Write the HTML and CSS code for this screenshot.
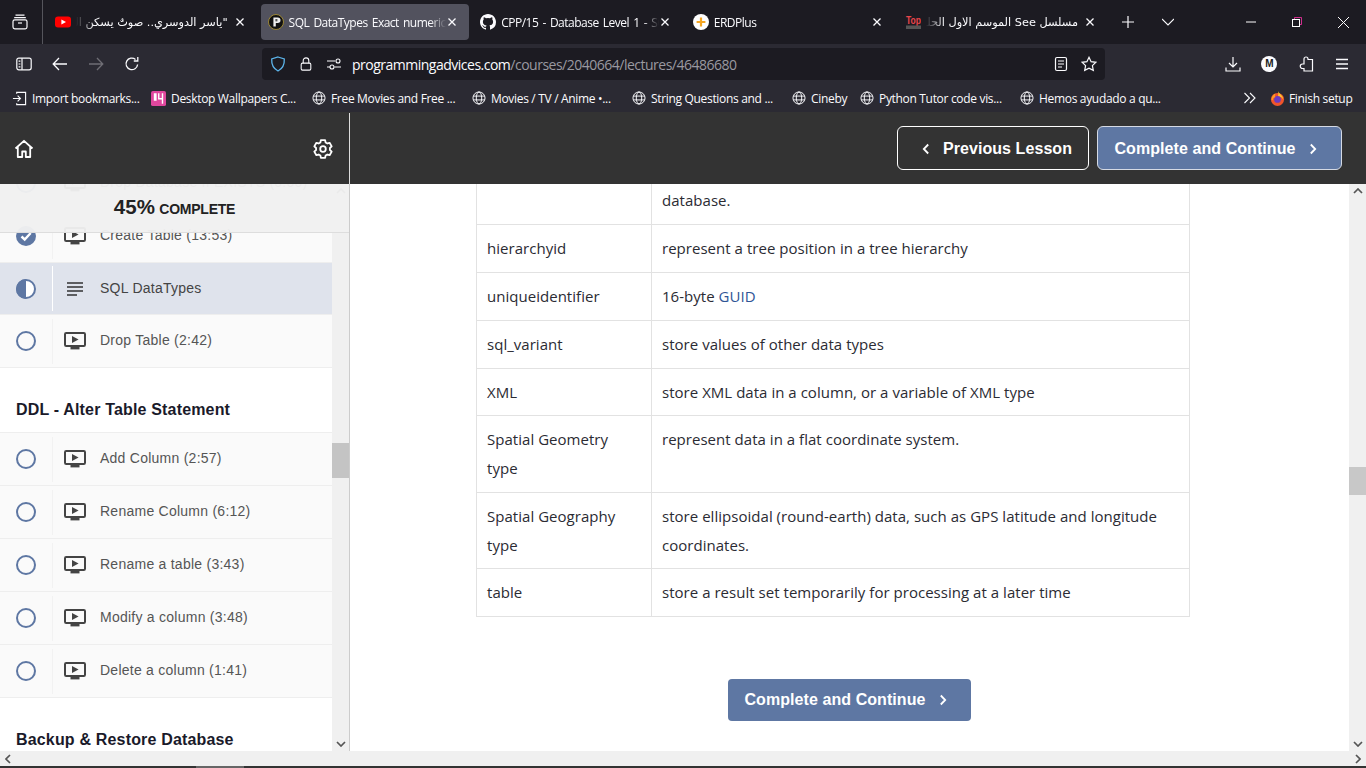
FILE: index.html
```html
<!DOCTYPE html>
<html lang="en">
<head>
<meta charset="utf-8">
<title>SQL DataTypes</title>
<link rel="stylesheet" href="styles.css">
</head>
<body>
<svg class="defs" width="0" height="0" aria-hidden="true">
  <symbol id="globe" viewBox="0 0 16 16"><g fill="none" stroke="currentColor" stroke-width="1.1"><circle cx="8" cy="8" r="6.9"/><ellipse cx="8" cy="8" rx="3.1" ry="6.9"/><path d="M1.5 5.8h13M1.5 10.2h13"/></g></symbol>
  <symbol id="close" viewBox="0 0 10 10"><path d="M1.5 1.5l7 7M8.5 1.5l-7 7" fill="none" stroke="currentColor" stroke-width="1.3"/></symbol>
  <symbol id="play" viewBox="0 0 22 20"><rect x="1" y="2" width="20" height="13" rx="1.2" fill="none" stroke="#444" stroke-width="2"/><rect x="6.5" y="16" width="9" height="2.4" fill="#444"/><path d="M8 5l6.600 3.500L8 12z" fill="#444"/></symbol>
  <symbol id="ring" viewBox="0 0 20 20"><circle cx="10" cy="10" r="9" fill="none" stroke="#5e77a3" stroke-width="2"/></symbol>
  <symbol id="chev-r" viewBox="0 0 8 12"><path d="M1.8 1.5L6.2 6l-4.4 4.5" fill="none" stroke="currentColor" stroke-width="1.8"/></symbol>
  <symbol id="chev-l" viewBox="0 0 8 12"><path d="M6.2 1.5L1.8 6l4.4 4.5" fill="none" stroke="currentColor" stroke-width="1.8"/></symbol>
</svg>

<header class="tabbar">
  <div class="tab-view">
    <svg class="ico16" viewBox="0 0 16 16"><g fill="none" stroke="#fbfbfe" stroke-width="1.2"><path d="M3.5 1.2h9M2.2 3.6h11.6"/><rect x="1" y="5.8" width="14" height="9" rx="1.8"/><path d="M6 9h4"/></g></svg>
  </div>
  <div class="tabs">
    <div class="tab">
      <svg class="fav" viewBox="0 0 16 16"><rect y="2.5" width="16" height="11" rx="3" fill="#f00"/><path d="M6.4 5.4L11 8l-4.6 2.6z" fill="#fff"/></svg>
      <span class="tab-title rtl">"ياسر الدوسري.. صوتٌ يسكن القلوب</span>
      <svg class="x"><use href="#close"/></svg>
    </div>
    <div class="tab tab-active">
      <svg class="fav" viewBox="0 0 16 16"><circle cx="8" cy="8" r="7.5" fill="#111" stroke="#b59a35" stroke-width=".8"/><path d="M5.4 3.6h4.4a2.6 2.6 0 010 5.4H7.8v3.6H5.4z" fill="#eee"/><path d="M7.4 5h2v2.4h-2z" fill="#555"/></svg>
      <span class="tab-title">SQL DataTypes Exact numeric types</span>
      <svg class="x"><use href="#close"/></svg>
    </div>
    <div class="tab">
      <svg class="fav" viewBox="0 0 16 16"><path fill="#fbfbfe" d="M8 0C3.58 0 0 3.58 0 8c0 3.54 2.29 6.53 5.47 7.59.4.07.55-.17.55-.38v-1.34c-2.23.48-2.7-1.07-2.7-1.07-.36-.92-.89-1.17-.89-1.17-.73-.5.05-.49.05-.49.8.06 1.23.83 1.23.83.71 1.22 1.87.87 2.33.66.07-.52.28-.87.5-1.07-1.78-.2-3.64-.89-3.64-3.95 0-.87.31-1.59.82-2.15-.08-.2-.36-1.02.08-2.12 0 0 .67-.21 2.2.82a7.6 7.6 0 014 0c1.53-1.04 2.2-.82 2.2-.82.44 1.1.16 1.92.08 2.12.51.56.82 1.27.82 2.15 0 3.07-1.87 3.75-3.65 3.95.29.25.54.73.54 1.48v2.2c0 .21.15.46.55.38A8 8 0 0016 8c0-4.42-3.58-8-8-8z"/></svg>
      <span class="tab-title">CPP/15 - Database Level 1 - SQL Server</span>
      <svg class="x"><use href="#close"/></svg>
    </div>
    <div class="tab">
      <svg class="fav" viewBox="0 0 16 16"><circle cx="8" cy="8" r="8" fill="#fff"/><path d="M8 3.6v8.8M3.6 8h8.8" stroke="#f5a623" stroke-width="2.2"/></svg>
      <span class="tab-title">ERDPlus</span>
      <svg class="x"><use href="#close"/></svg>
    </div>
    <div class="tab">
      <svg class="fav" viewBox="0 0 16 16"><text x="8.5" y="10" class="top-mark" textLength="15" lengthAdjust="spacingAndGlyphs">Top</text><rect x="1" y="11.500" width="15" height="3.500" fill="#555"/></svg>
      <span class="tab-title rtl">مسلسل See الموسم الاول الحلقة الأولى</span>
      <svg class="x"><use href="#close"/></svg>
    </div>
  </div>
  <button class="chrome-btn plus"><svg class="ico12" viewBox="0 0 12 12"><path d="M6 0v12M0 6h12" stroke="#fbfbfe" stroke-width="1.2"/></svg></button>
  <button class="chrome-btn chev"><svg class="ico12" viewBox="0 0 12 12"><path d="M0 3l6 6 6-6" fill="none" stroke="#fbfbfe" stroke-width="1.1"/></svg></button>
  <div class="win-btns">
    <svg class="ico10" viewBox="0 0 10 10"><path d="M0 5h10" stroke="#fff"/></svg>
    <svg class="ico10" viewBox="0 0 10 10"><path d="M2.5 2V.5h7v7H8" fill="none" stroke="#f3a" stroke-width=".8"/><rect x=".5" y="2.5" width="7" height="7" fill="none" stroke="#fff"/></svg>
    <svg class="ico11" viewBox="0 0 10 10"><path d="M0 0l10 10M10 0L0 10" stroke="#fff" stroke-width=".9"/></svg>
  </div>
</header>

<nav class="toolbar">
  <div class="nav-btns">
    <svg class="ico16" viewBox="0 0 16 16"><g fill="none" stroke="#fbfbfe" stroke-width="1.2"><rect x=".8" y="2.2" width="14.4" height="11.6" rx="2"/><path d="M6 2.2v11.6"/><path d="M2.6 5.2h1.8M2.6 8h1.8M2.6 10.8h1.8"/></g></svg>
    <svg class="ico16" viewBox="0 0 16 16"><path d="M7 2L1.2 8 7 14M1.5 8H15" fill="none" stroke="#fbfbfe" stroke-width="1.3"/></svg>
    <svg class="ico16" viewBox="0 0 16 16"><path d="M9 2l5.800 6L9 14M14.500 8H1" fill="none" stroke="#6f6e75" stroke-width="1.3"/></svg>
    <svg class="ico16" viewBox="0 0 16 16"><path d="M13.600 8.500A5.800 5.800 0 1 1 11.500 3.400M13.800 1v4h-4" fill="none" stroke="#fbfbfe" stroke-width="1.3"/></svg>
  </div>
  <div class="urlbar">
    <svg class="ico16 shield" viewBox="0 0 16 16"><path d="M8 1l6.300 2c.3 5.500-1.500 9.500-6.300 12C3.200 12.500 1.400 8.500 1.700 3z" fill="none" stroke="#5cb4ea" stroke-width="1.300"/></svg>
    <svg class="ico16 lock" viewBox="0 0 16 16"><g fill="none" stroke="#fbfbfe" stroke-width="1.200"><rect x="2.500" y="7" width="11" height="8" rx="1.500"/><path d="M4.800 7V4.200a3.200 3.200 0 016.400 0V7"/></g></svg>
    <svg class="ico16 tune" viewBox="0 0 16 16"><g fill="none" stroke="#fbfbfe" stroke-width="1.100"><path d="M1 5h8M1 11h3M8.500 11H15"/><circle cx="12" cy="5" r="2"/><circle cx="6" cy="11" r="2"/></g></svg>
    <span class="url"><b>programmingadvices.com</b>/courses/2040664/lectures/46486680</span>
    <svg class="ico16 reader" viewBox="0 0 16 16"><g fill="none" stroke="#fbfbfe" stroke-width="1.200"><rect x="2.500" y="1.500" width="11" height="13" rx="1.500"/><path d="M5 5h6M5 8h6M5 11h4"/></g></svg>
    <svg class="ico16" viewBox="0 0 16 16"><path d="M8 1.300l2.100 4.400 4.800.6-3.500 3.300.9 4.800L8 12.100l-4.300 2.300.9-4.800L1.100 6.300l4.800-.6z" fill="none" stroke="#fbfbfe" stroke-width="1.200"/></svg>
  </div>
  <div class="tool-right">
    <svg class="ico16" viewBox="0 0 16 16"><path d="M8 1v9.500M4 7l4 4 4-4M1 11.500V15h14v-3.500" fill="none" stroke="#fbfbfe" stroke-width="1.200"/></svg>
    <span class="avatar">M</span>
    <svg class="ico16" viewBox="0 0 16 16"><path d="M6 3.500V3a2 2 0 014 0v.5h4.500V15H6v-2.500H4.500a2.200 2.200 0 010-4.500H6V3.500" fill="none" stroke="#fbfbfe" stroke-width="1.200"/></svg>
    <svg class="ico16" viewBox="0 0 16 16"><path d="M2 3.500h12M2 8h12M2 12.500h12" stroke="#fbfbfe" stroke-width="1.300"/></svg>
  </div>
</nav>

<div class="bookmarks">
  <a class="bm"><svg class="bi" viewBox="0 0 16 16"><path d="M5 3V1.500h9.500v13H5V13M1 8h8M6 5l3 3-3 3" fill="none" stroke="#fbfbfe" stroke-width="1.200"/></svg>Import bookmarks...</a>
  <a class="bm"><svg class="bi" viewBox="0 0 16 16"><rect width="16" height="16" rx="2" fill="#e0479e"/><path d="M3 2.500h3v8H3zM7.500 2.500H9v5h2.500v-5H13v11h-1.500V9h-4z" fill="#fff"/></svg>Desktop Wallpapers C...</a>
  <a class="bm"><svg class="gl"><use href="#globe"/></svg>Free Movies and Free ...</a>
  <a class="bm"><svg class="gl"><use href="#globe"/></svg>Movies / TV / Anime •...</a>
  <a class="bm"><svg class="gl"><use href="#globe"/></svg>String Questions and ...</a>
  <a class="bm"><svg class="gl"><use href="#globe"/></svg>Cineby</a>
  <a class="bm"><svg class="gl"><use href="#globe"/></svg>Python Tutor code vis...</a>
  <a class="bm"><svg class="gl"><use href="#globe"/></svg>Hemos ayudado a qu...</a>
  <svg class="bm-more" viewBox="0 0 14 12"><path d="M1.500 1l5 5-5 5M7 1l5 5-5 5" fill="none" stroke="#fbfbfe" stroke-width="1.100"/></svg>
  <a class="bm fin"><svg class="bi" viewBox="0 0 16 16"><circle cx="8" cy="9" r="7" fill="#f0542b"/><path d="M8.500 0c.500 2 3 3 4.500 5.500 1 1.700 1 3 1 3.500-1-2.500-4-3.500-5.500-3 .5-2.500.5-4 0-6z" fill="#ffc22e"/><circle cx="8" cy="9" r="3.600" fill="#6a3bc0"/><path d="M1.500 9C2 5 4.500 3 6 3 5 4.500 5 6 6 6.500c-2 .5-3 1.500-3 3.500z" fill="#ff9a24"/></svg>Finish setup</a>
</div>

<div class="page">
  <div class="course-top">
    <div class="side-top">
      <svg class="white20" viewBox="0 0 20 20"><path d="M1.500 9.500L10 1.800l8.500 7.700M3.800 8v10h4.400v-5.500h3.600V18h4.400V8" fill="none" stroke="#fff" stroke-width="1.800" stroke-linejoin="round"/></svg>
      <svg class="white20" viewBox="0 0 20 20"><g fill="none" stroke="#fff" stroke-width="1.800" stroke-linejoin="round"><path d="M7.380 3.510L7.860 1.200H12.140L12.620 3.510L14.310 4.480L16.600 3.800L18.700 7.400L16.930 9.030V10.970L18.700 12.600L16.600 16.200L14.310 15.520L12.620 16.490L12.140 18.800H7.860L7.380 16.490L5.690 15.520L3.400 16.200L1.300 12.600L3.070 10.970V9.030L1.300 7.400L3.400 3.800L5.690 4.480z"/><circle cx="10" cy="10" r="2.800"/></g></svg>
    </div>
    <div class="top-actions">
      <a class="btn btn-ghost"><svg class="chev-sm"><use href="#chev-l"/></svg>Previous Lesson</a>
      <a class="btn btn-primary">Complete and Continue<svg class="chev-sm"><use href="#chev-r"/></svg></a>
    </div>
  </div>

  <div class="course-body">
    <aside class="sidebar">
      <div class="progress"><strong>45%</strong> <span>COMPLETE</span></div>
      <div class="side-scroll">
        <ul class="lessons">
          <li class="row"><span class="state"><svg class="ring"><use href="#ring"/></svg></span><svg class="play"><use href="#play"/></svg><span class="lbl">Drop Database If EXISTS (0:00)</span></li>
          <li class="row"><span class="state"><svg class="ring" viewBox="0 0 20 20"><circle cx="10" cy="10" r="10" fill="#5e77a3"/><path d="M5.500 10.500l3.200 3 6-6.500" fill="none" stroke="#fff" stroke-width="2.400"/></svg></span><svg class="play"><use href="#play"/></svg><span class="lbl">Create Table (13:53)</span></li>
          <li class="row row-active"><span class="state"><svg class="ring" viewBox="0 0 20 20"><circle cx="10" cy="10" r="9" fill="#fff" stroke="#5e77a3" stroke-width="2"/><path d="M10 0a10 10 0 000 20z" fill="#5e77a3"/></svg></span><svg class="doc" viewBox="0 0 16 14"><path d="M0 1h16M0 5h16M0 9h16M0 13h10" stroke="#333" stroke-width="1.700"/></svg><span class="lbl">SQL DataTypes</span></li>
          <li class="row"><span class="state"><svg class="ring"><use href="#ring"/></svg></span><svg class="play"><use href="#play"/></svg><span class="lbl">Drop Table (2:42)</span></li>
        </ul>
        <h3 class="section">DDL - Alter Table Statement</h3>
        <ul class="lessons">
          <li class="row"><span class="state"><svg class="ring"><use href="#ring"/></svg></span><svg class="play"><use href="#play"/></svg><span class="lbl">Add Column (2:57)</span></li>
          <li class="row"><span class="state"><svg class="ring"><use href="#ring"/></svg></span><svg class="play"><use href="#play"/></svg><span class="lbl">Rename Column (6:12)</span></li>
          <li class="row"><span class="state"><svg class="ring"><use href="#ring"/></svg></span><svg class="play"><use href="#play"/></svg><span class="lbl">Rename a table (3:43)</span></li>
          <li class="row"><span class="state"><svg class="ring"><use href="#ring"/></svg></span><svg class="play"><use href="#play"/></svg><span class="lbl">Modify a column (3:48)</span></li>
          <li class="row"><span class="state"><svg class="ring"><use href="#ring"/></svg></span><svg class="play"><use href="#play"/></svg><span class="lbl">Delete a column (1:41)</span></li>
        </ul>
        <h3 class="section">Backup &amp; Restore Database</h3>
      </div>
      <div class="vbar">
        <svg class="arr up" viewBox="0 0 10 6"><path d="M1 5l4-4 4 4" fill="none" stroke="#555" stroke-width="1.700"/></svg>
        <span class="thumb side-thumb"></span>
        <svg class="arr" viewBox="0 0 10 6"><path d="M1 1l4 4 4-4" fill="none" stroke="#555" stroke-width="1.700"/></svg>
      </div>
    </aside>

    <main class="content">
      <div class="article">
        <table class="types">
          <tr class="first"><td></td><td>database.</td></tr>
          <tr><td>hierarchyid</td><td>represent a tree position in a tree hierarchy</td></tr>
          <tr><td>uniqueidentifier</td><td>16-byte <a class="link">GUID</a></td></tr>
          <tr><td>sql_variant</td><td>store values of other data types</td></tr>
          <tr class="tight"><td>XML</td><td>store XML data in a column, or a variable of XML type</td></tr>
          <tr><td>Spatial Geometry type</td><td>represent data in a flat coordinate system.</td></tr>
          <tr><td>Spatial Geography type</td><td>store ellipsoidal (round-earth) data, such as GPS latitude and longitude coordinates.</td></tr>
          <tr><td>table</td><td>store a result set temporarily for processing at a later time</td></tr>
        </table>
        <div class="foot"><a class="btn btn-primary btn-foot">Complete and Continue<svg class="chev-sm"><use href="#chev-r"/></svg></a></div>
      </div>
      <div class="vbar main-bar">
        <svg class="arr up" viewBox="0 0 10 6"><path d="M1 5l4-4 4 4" fill="none" stroke="#555" stroke-width="1.700"/></svg>
        <span class="thumb main-thumb"></span>
        <svg class="arr" viewBox="0 0 10 6"><path d="M1 1l4 4 4-4" fill="none" stroke="#555" stroke-width="1.700"/></svg>
      </div>
    </main>
  </div>

  <div class="hbar">
    <svg class="harr" viewBox="0 0 6 10"><path d="M5 1L1 5l4 4" fill="none" stroke="#555" stroke-width="1.700"/></svg>
    <svg class="harr" viewBox="0 0 6 10"><path d="M1 1l4 4-4 4" fill="none" stroke="#555" stroke-width="1.700"/></svg>
  </div>
</div>
<div class="taskbar"><span class="task-mark"></span></div>
</body>
</html>
```
FILE: styles.css
```css
* { box-sizing: border-box; }
html, body { margin: 0; height: 100%; }
body {
  width: 1366px; height: 768px; overflow: hidden;
  display: flex; flex-direction: column;
  background: #fff; font-family: "Liberation Sans", Arial, sans-serif;
}
svg { display: block; flex: none; }
.defs { position: absolute; }
ul { list-style: none; margin: 0; padding: 0; }
button { background: none; border: 0; padding: 0; }

.ico16 { width: 16px; height: 16px; }
.ico12 { width: 12px; height: 12px; }
.ico10 { width: 10px; height: 10px; }
.ico11 { width: 11px; height: 11px; }

/* tab strip */
.tabbar { height: 44px; background: #1c1b22; display: flex; align-items: center; color: #fbfbfe; font: 12px "Open Sans", "DejaVu Sans", sans-serif; flex: none; }
.tab-view { width: 43px; height: 44px; padding: 14px 0 0 12px; border-right: 1px solid #55555c; }
.tabs { display: flex; gap: 4px; margin-left: 5px; }
.tab { width: 208.6px; height: 36px; border-radius: 4px; display: flex; align-items: center; padding: 0 12px 0 7px; gap: 5px; }
.tab-active { background: #52525e; }
.fav { width: 16px; height: 16px; }
.tab-title { flex: 1; min-width: 0; margin-right: -4px; white-space: nowrap; overflow: hidden; letter-spacing: -.5px; word-spacing: 1.5px;
  -webkit-mask-image: linear-gradient(90deg, #000 90%, transparent 100%); mask-image: linear-gradient(90deg, #000 90%, transparent 100%); }
.tab-title.rtl { direction: rtl; text-align: right; margin-right: 2px; letter-spacing: 0; word-spacing: 0; font-family: "DejaVu Sans", sans-serif; font-size: 11.300px;
  -webkit-mask-image: linear-gradient(270deg, #000 88%, transparent 100%); mask-image: linear-gradient(270deg, #000 88%, transparent 100%); }
.x { width: 10px; height: 10px; color: #fbfbfe; }
.top-mark { font: bold 11px "Liberation Sans", sans-serif; fill: #e8454a; text-anchor: middle; }
.chrome-btn { display: flex; }
.plus { margin-left: 15px; }
.chev { margin-left: 28px; }
.win-btns { margin-left: auto; width: 138px; display: flex; align-items: center; gap: 36px; padding-left: 18px; }

/* nav toolbar */
.toolbar { height: 40px; background: #2b2a33; display: flex; align-items: center; flex: none; }
.nav-btns { width: 262px; padding: 0 122px 0 16px; display: flex; justify-content: space-between; }
.urlbar { width: 843px; height: 32px; background: #1c1b22; border-radius: 4px; display: flex; align-items: center; padding: 0 8px; color: #fbfbfe; }
.shield { margin-right: 13px; }
.lock { margin-right: 13px; width: 14px; height: 14px; }
.tune { margin-right: 10px; }
.url { flex: 1; font: 14px "Open Sans", sans-serif; color: #9a99a0; white-space: nowrap; letter-spacing: -.5px; }
.url b { font-weight: 400; color: #fbfbfe; }
.reader { margin-right: 12px; }
.tool-right { flex: 1; display: flex; align-items: center; justify-content: space-between; padding: 0 16px 0 120px; }
.avatar { width: 16px; height: 16px; border-radius: 50%; background: #fbfbfe; color: #1c1b22; font: bold 10px/16px "Liberation Sans", sans-serif; text-align: center; }

/* bookmarks */
.bookmarks { height: 28px; background: #2b2a33; display: grid; grid-template-columns: 139px 161px 160px 160px 160px 68px 160px 223px 27px auto; align-items: center; padding: 0 12px; color: #fbfbfe; font: 12px "Open Sans", sans-serif; flex: none; letter-spacing: -.32px; }
.bm { display: flex; align-items: center; gap: 5px; white-space: nowrap; }
.bi { width: 15px; height: 15px; color: #fbfbfe; }
.gl { width: 14px; height: 14px; color: #fbfbfe; }
.bm-more { width: 14px; height: 12px; }
.fin { gap: 4px; }

/* course header */
.page { flex: 1; min-height: 0; display: flex; flex-direction: column; }
.course-top { height: 72px; background: #333; display: flex; flex: none; }
.side-top { width: 350px; border-right: 1px solid #ddd; display: flex; align-items: center; justify-content: space-between; padding: 0 16px 0 14px; margin-top: 1px; }
.white20 { width: 20px; height: 20px; }
.top-actions { flex: 1; display: flex; justify-content: flex-end; align-items: center; gap: 8px; padding-right: 24px; }
.btn { height: 44px; border-radius: 6px; display: flex; align-items: center; justify-content: center; color: #fff; font: bold 16px "Liberation Sans", sans-serif; letter-spacing: .07px; border: 1px solid #fff; white-space: nowrap; padding-top: 1px; }
.btn-ghost { width: 192px; gap: 13px; padding-left: 8px; }
.btn-primary { width: 245px; background: #5e77a3; border-color: #d5dae4; gap: 13px; padding-right: 8px; }
.btn-foot { width: 243px; height: 42px; border-radius: 4px; border: 0; gap: 13px; padding-top: 0; }
.chev-sm { width: 8px; height: 12px; }

/* body */
.course-body { flex: 1; min-height: 0; display: flex; }
.sidebar { width: 350px; display: flex; position: relative; border-right: 1px solid #ccc; flex: none; }
.progress { position: absolute; left: 0; top: 0; width: 349px; height: 49px; background: rgba(240,240,240,.96); border-bottom: 1px solid #ddd; text-align: center; line-height: 46px; color: #222; z-index: 2; }
.progress strong { font-size: 20.500px; }
.progress span { font-size: 14px; font-weight: 700; letter-spacing: -.25px; }
.side-scroll { width: 332px; overflow: hidden; }
.side-scroll > .lessons:first-child { margin-top: -27px; }
.row { height: 53px; background: #fafafa; border-bottom: 1px solid #eee; display: flex; align-items: center; }
.row-active { height: 52px; background: #dfe3ec; }
.row-active .state { border-right-color: #fff; }
.state { width: 53px; height: 45px; border-right: 1px solid #f2f2f2; display: flex; align-items: center; padding-left: 16px; flex: none; }
.ring { width: 20px; height: 20px; }
.play { width: 22px; height: 20px; margin-left: 11px; }
.doc { width: 16px; height: 14px; margin-left: 14px; }
.lbl { margin-left: 14px; font-size: 14px; color: #555; white-space: nowrap; letter-spacing: .25px; padding-bottom: 2px; }
.row-active .lbl { color: #444; margin-left: 17px; }
.section { margin: 0; padding: 33px 0 0 16px; height: 65px; font-size: 16px; line-height: 18px; color: #1a1a2a; background: #fff; letter-spacing: .17px; }
.lessons + .section { border-bottom: 1px solid #eee; }
.lessons + .section:last-child { border: 0; padding-top: 33px; }

.vbar { width: 17px; background: #f0f0f0; display: flex; flex-direction: column; align-items: center; position: relative; flex: none; }
.arr { width: 10px; height: 6px; margin-top: auto; margin-bottom: 4px; }
.arr.up { margin-top: 4px; margin-bottom: 0; }
.thumb { position: absolute; left: 0; width: 17px; background: #c4c4c4; }
.side-thumb { top: 259px; height: 35px; }
.main-thumb { top: 283px; height: 28px; background: #c8c8c8; }

/* article */
.content { flex: 1; min-width: 0; display: flex; }
.article { flex: 1; overflow: hidden; }
.types { width: 714px; margin-left: 126px; border-collapse: separate; border-spacing: 0; border-left: 1px solid #e2e2e2; font: 15px/28.9px "Open Sans", sans-serif; color: #2b2b33; table-layout: fixed; letter-spacing: .03px; }
.types td { padding: 9px 10px; border-bottom: 1px solid #e2e2e2; border-right: 1px solid #e2e2e2; vertical-align: top; }
.types td:first-child { width: 175px; }
.types .first td { padding: 2px 10px 9.300px; }
.types .tight td { padding-bottom: 8px; }
.link { color: #2f5596; }
.foot { padding-top: 62px; display: flex; justify-content: center; }

.hbar { height: 15px; background: #f0f0f0; display: flex; align-items: center; justify-content: space-between; padding: 0 5px; flex: none; }
.harr { width: 6px; height: 10px; }
.taskbar { height: 2px; background: #333; flex: none; display: flex; padding-left: 196px; }
.task-mark { width: 48px; background: #666; }
```
